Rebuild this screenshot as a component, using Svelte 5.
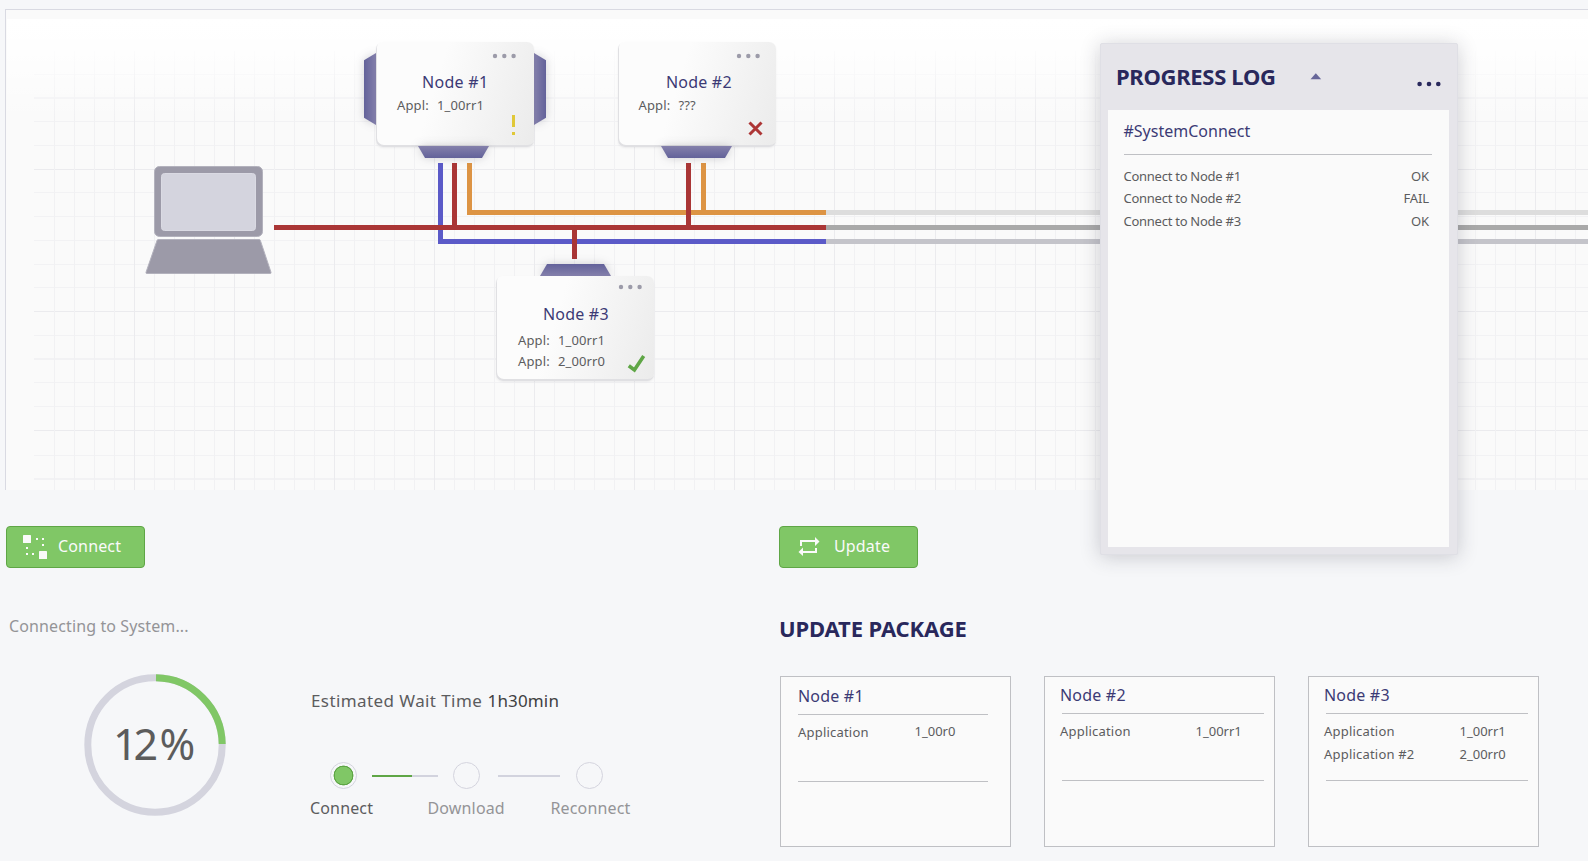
<script>
  const vLines = Array.from({ length: 77 }, (_, k) => ({
    pos: 54 + 20 * k + (k > 42 ? 1 : 0),
    major: k % 5 === 4
  }));
  const hLines = [
    [74, 0], [97, 2], [121, 0], [145, 0], [169, 1], [192, 0], [216, 0], [240, 0],
    [264, 0], [287, 0], [311, 1], [335, 0], [358, 2], [382, 0], [406, 0],
    [430, 1], [455, 0], [478, 2]
  ];

  const nodes = [
    {
      name: 'Node #1', x: 376, y: 42, dots: 119, dotY: 14, ports: ['left', 'right', 'bottom'], portX: 42,
      apps: ['1_00rr1'], state: 'warn', indent: 46, pad: 21, spacing: 0.3
    },
    {
      name: 'Node #2', x: 618, y: 42, dots: 121, dotY: 14, ports: ['bottom'], portX: 43,
      apps: ['???'], state: 'fail', indent: 48, pad: 20.5, spacing: 0.2
    },
    {
      name: 'Node #3', x: 496, y: 276, dots: 125, dotY: 11, ports: ['top'], portX: 44,
      apps: ['1_00rr1', '2_00rr0'], state: 'ok', indent: 47, pad: 22, spacing: 0.2
    }
  ];

  const log = [
    ['Connect to Node #1', 'OK'],
    ['Connect to Node #2', 'FAIL'],
    ['Connect to Node #3', 'OK']
  ];

  const packages = [
    { name: 'Node #1', apps: [['Application', '1_00r0']] },
    { name: 'Node #2', apps: [['Application', '1_00rr1']] },
    { name: 'Node #3', apps: [['Application', '1_00rr1'], ['Application #2', '2_00rr0']] }
  ];
</script>

<div class="page">
  <section class="map">
    <svg class="canvas" width="1588" height="490" viewBox="0 0 1588 490">
      <defs>
        <linearGradient id="fade" x1="0" y1="0" x2="0" y2="1">
          <stop offset="0" stop-color="#fff" />
          <stop offset=".3" stop-color="#fff" stop-opacity=".85" />
          <stop offset="1" stop-color="#fff" stop-opacity="0" />
        </linearGradient>
      </defs>
      <rect x="5" y="9" width="1583" height="481" fill="#fafafa" />
      {#each hLines as [y, kind]}
        <rect x="34" {y} width="1554" height={kind === 2 ? 2 : 1} fill={kind === 1 ? '#ebebee' : '#f2f2f4'} />
      {/each}
      {#each vLines as line}
        <rect x={line.pos} y="51" width="1" height="439" fill={line.major ? '#ebebee' : '#f1f1f3'} />
      {/each}
      <rect x="7" y="19" width="1581" height="100" fill="url(#fade)" />
      <rect x="5" y="9" width="1583" height="1" fill="#d9dae2" />
      <rect x="5" y="9" width="1" height="481" fill="#d9dae2" />

      <g stroke="#b3b2bd" stroke-width="1">
        <rect x="154.5" y="166.500" width="108" height="70" rx="5" fill="#9c9aa8" />
        <path d="M158.200 239.500h101q.8 0 1.100.8l10.700 32q.3 1.200-.8 1.200h-123.400q-1.100 0-.8-1.200l11.100-32q.3-.8 1.100-.8z" fill="#9c9aa8" />
        <rect x="161.500" y="173.500" width="94" height="57" rx="3" fill="#d4d4de" stroke="#dadae3" />
      </g>

      <g fill="none" stroke-width="5">
        <path d="M826 212.500H1588" stroke="#dddddd" />
        <path d="M826 227.500H1588" stroke="#a9a9a9" />
        <path d="M826 241.500H1588" stroke="#c4c4ca" />
        <path d="M440.500 163V241.500H826" stroke="#5b5ac8" />
        <path d="M469.500 163V212.500H826M703.500 163V210" stroke="#dd9444" />
        <path d="M274 227.500H826M454.500 163V226M688.500 163V226M574.500 229V259" stroke="#aa3636" />
      </g>
    </svg>

    {#each nodes as node}
      <article class="node" style="left:{node.x}px;top:{node.y}px">
        {#each node.ports as side}
          <span class="port {side}" style={side === 'top' || side === 'bottom' ? `left:${node.portX}px` : ''}><i></i></span>
        {/each}
        <div class="face" class:pair={node.apps.length > 1}>
          <h3 style="padding-left:{node.indent}px;letter-spacing:{node.spacing}px">{node.name}</h3>
          <dl style="padding-left:{node.pad}px">
            {#each node.apps as app}
              <dt>Appl:</dt><dd>{app}</dd>
            {/each}
          </dl>
        </div>
        <svg class="marks" width="158" height="105" viewBox="0 0 158 105">
          <g fill="#9c9ba9">
            {#each [0, 9.3, 18.6] as dx}
              <circle cx={node.dots + dx} cy={node.dotY} r="2.200" />
            {/each}
          </g>
          {#if node.state === 'warn'}
            <path d="M136 73h3v12h-3zM136 90h3v3h-3z" fill="#e0c838" />
          {:else if node.state === 'fail'}
            <path d="M131.500 80.500l12 12M143.500 80.500l-12 12" stroke="#ad3636" stroke-width="3" />
          {:else}
            <path d="M132.800 89.800l5.600 4.200 9.300-14" fill="none" stroke="#5fa646" stroke-width="3.600" />
          {/if}
        </svg>
      </article>
    {/each}
  </section>

  <main>
    <section class="connect">
      <button>
        <svg width="26" height="26" viewBox="0 0 26 26" fill="#fafafa">
          <rect x="0" y="0" width="8" height="8" rx=".6" />
          <rect x="16" y="16" width="8" height="8" rx=".6" />
          <path d="M13 3h2v2h-2zM19 3h2v2h-2zM19 9h2v2h-2zM3 12h2v2H3zM3 18h2v2H3zM9 18h2v2H9z" />
        </svg>
        <span>Connect</span>
      </button>
      <p class="status">Connecting to System...</p>
      <div class="progress">
        <svg class="ring" width="142" height="142" viewBox="0 0 142 142">
          <circle cx="71" cy="71" r="67.200" fill="none" stroke="#d4d4de" stroke-width="7" />
          <path d="M72 3.800A67.200 67.200 0 0 1 138.200 70" fill="none" stroke="#80c766" stroke-width="7" />
          <text x="29 49.5 75.5" y="86">12%</text>
        </svg>
        <div class="details">
          <p class="wait">Estimated Wait Time <b>1h30min</b></p>
          <div class="track">
            <span class="step active"></span>
            <span class="bar first"><i></i></span>
            <span class="step"></span>
            <span class="bar second"></span>
            <span class="step"></span>
          </div>
          <div class="labels"><span class="on">Connect</span><span>Download</span><span>Reconnect</span></div>
        </div>
      </div>
    </section>

    <section class="update">
      <button>
        <svg class="loop" width="24" height="20" viewBox="0 0 24 20" fill="#fafafa">
          <path d="M2 10V4h15V1l4.500 4.500L17 10V6H4v4z" />
          <path d="M19 12v5H5v3L.5 16 5 11.500V15h12v-3z" />
        </svg>
        <span>Update</span>
      </button>
      <h2>UPDATE PACKAGE</h2>
      <div class="cards">
        {#each packages as pack, i}
          <article class="card" class:wide={i > 0}>
            <h3>{pack.name}</h3>
            <hr />
            <dl>
              {#each pack.apps as [label, version]}
                <dt>{label}</dt><dd>{version}</dd>
              {/each}
            </dl>
            <hr />
          </article>
        {/each}
      </div>
    </section>
  </main>

  <aside class="log">
    <header>
      <h2>PROGRESS LOG</h2>
      <svg class="caret" width="12" height="7" viewBox="0 0 12 7"><path d="M.5 6.300L5.800 .2L11.200 6.300z" fill="#676699" /></svg>
      <svg class="more" width="24" height="6" viewBox="0 0 24 6" fill="#29285c">
        <circle cx="2.600" cy="3" r="2.300" /><circle cx="12" cy="3" r="2.300" /><circle cx="21.300" cy="3" r="2.300" />
      </svg>
    </header>
    <div class="body">
      <h3>#SystemConnect</h3>
      <hr />
      <ul>
        {#each log as [task, result]}
          <li><span>{task}</span><em>{result}</em></li>
        {/each}
      </ul>
    </div>
  </aside>
</div>

<style>
  :global(body) {
    margin: 0;
    background: #f6f7f9;
  }
  .page {
    position: relative;
    width: 1588px;
    height: 861px;
    overflow: hidden;
    background: #f6f7f9;
    color: #5c5c5e;
    font-family: "Noto Sans", "Open Sans", sans-serif;
    font-size: 13px;
    line-height: 18px;
  }
  h2, h3, p, dl, dd, ul {
    margin: 0;
    padding: 0;
  }
  h2 {
    color: #29285c;
    font-size: 22px;
    line-height: 30px;
    font-weight: 700;
    white-space: nowrap;
  }
  h3 {
    color: #3c3a75;
    font-size: 16px;
    line-height: 20px;
    font-weight: 400;
    letter-spacing: 0.2px;
  }
  svg { display: block; flex: none; }
  hr {
    border: 0;
    height: 1px;
    margin: 0;
    background: #bfc0c4;
  }

  .map { position: relative; height: 490px; }
  .node {
    position: absolute;
    width: 158px;
    height: 105px;
  }
  .face {
    position: absolute;
    inset: 0;
    box-sizing: border-box;
    padding-top: 30px;
    border-radius: 7px;
    background: linear-gradient(107deg, #fcfcfc 38%, #ebebeb 100%);
    box-shadow: inset 1px -2px 0 #e0e0e3, 0 1px 2px rgba(60, 60, 80, 0.08);
  }
  .face dl {
    display: grid;
    grid-template-columns: 40px auto;
    row-gap: 3px;
    margin-top: 4px;
    letter-spacing: 0.12px;
  }
  .face.pair { padding-top: 28px; }
  .face.pair dl { margin-top: 7px; }
  .marks { position: absolute; inset: 0; }

  .port {
    position: absolute;
    filter: drop-shadow(0 0 5px rgba(50, 50, 70, 0.22));
  }
  .port i { display: block; width: 100%; height: 100%; }
  .port.left, .port.right { top: 11px; width: 12px; height: 72px; }
  .port.left { left: -12px; }
  .port.right { right: -12px; }
  .port.top, .port.bottom { width: 71px; height: 12px; }
  .port.top { top: -12px; }
  .port.bottom { bottom: -11px; z-index: 1; }
  .left i {
    background: linear-gradient(90deg, #63629a, #8480ab);
    clip-path: polygon(0 10%, 100% 0, 100% 100%, 0 90%);
  }
  .right i {
    background: linear-gradient(270deg, #63629a, #8480ab);
    clip-path: polygon(0 0, 100% 10%, 100% 90%, 0 100%);
  }
  .top i {
    background: linear-gradient(180deg, #63629a, #8480ab);
    clip-path: polygon(7px 0, 64px 0, 100% 100%, 0 100%);
  }
  .bottom i {
    background: linear-gradient(0deg, #63629a, #8480ab);
    clip-path: polygon(0 0, 100% 0, 64px 100%, 7px 100%);
  }

  main {
    display: grid;
    grid-template-columns: 773px auto;
    padding: 36px 0 0 6px;
  }
  button {
    display: flex;
    align-items: flex-start;
    box-sizing: border-box;
    width: 139px;
    height: 42px;
    padding: 8px 0 0 16px;
    border: 1px solid #5fa646;
    border-radius: 4px;
    background: #80c766;
    color: #fafafa;
    font: 400 16px/20px "Noto Sans", sans-serif;
    letter-spacing: 0.15px;
  }
  button span { margin: 1px 0 0 9px; }
  button .loop { margin: 1px 0 0 1px; overflow: visible; }
  .update button { padding-left: 17px; }
  .update button span { margin-left: 12px; }

  .status {
    margin: 48px 0 38px 3px;
    color: #949497;
    font-size: 16px;
    line-height: 20px;
    letter-spacing: 0.12px;
  }
  .progress { display: flex; padding-left: 78px; }
  .ring text {
    font-size: 43px;
    fill: #5c5c5c;
  }
  .details { padding: 15px 0 0 84px; }
  .wait {
    padding-left: 1px;
    font-size: 17px;
    line-height: 23px;
    letter-spacing: 0.41px;
    white-space: nowrap;
  }
  .wait b {
    color: #404041;
    font-weight: 400;
    letter-spacing: 0.15px;
    margin-left: 0.500px;
  }
  .track {
    display: flex;
    align-items: center;
    margin: 51px 0 0 20px;
    height: 26px;
  }
  .step {
    box-sizing: border-box;
    width: 27px;
    height: 27px;
    margin-top: -1px;
    border: 1px solid #d4d4de;
    border-radius: 50%;
  }
  .step.active {
    margin-right: -1px;
    background: radial-gradient(circle, #80c766 8.500px, #5fa646 9px 9.700px, transparent 10.200px);
  }
  .bar { height: 2px; background: #d2d3de; }
  .bar i { display: block; width: 40px; height: 2px; background: #5fa646; }
  .first { width: 66px; margin: 0 15px 0 16px; }
  .second { width: 62px; margin: 0 16px 0 18px; }
  .labels {
    display: grid;
    grid-template-columns: 117.500px 123px auto;
    margin-top: 9px;
    color: #949497;
    font-size: 16px;
    line-height: 20px;
    letter-spacing: 0.15px;
  }
  .labels .on { color: #5c5c5e; }

  .update h2 { margin: 45px 0 33px 0; letter-spacing: -0.13px; }
  .cards { display: flex; gap: 33px; padding-left: 1px; }
  .card {
    box-sizing: border-box;
    width: 231px;
    height: 171px;
    padding: 9px 22px 0 17px;
    border: 1px solid #bfc0c4;
    background: #fafafa;
  }
  .card h3 + hr { margin-top: 8px; }
  .card dl {
    display: grid;
    grid-template-columns: 116px auto;
    align-content: start;
    row-gap: 5px;
    box-sizing: border-box;
    height: 66px;
    padding-top: 8px;
    letter-spacing: 0.2px;
  }
  .card dd { margin-top: -1px; padding-left: 0.500px; letter-spacing: 0; }
  .card.wide { padding: 8px 10px 0 15px; }
  .card.wide hr { margin-left: 2px; }
  .card.wide dl { grid-template-columns: 135px auto; }
  .card.wide dd { margin-top: 0; }

  .log {
    position: absolute;
    left: 1100px;
    top: 43px;
    box-sizing: border-box;
    width: 358px;
    height: 512px;
    padding: 0 8px 7px 7px;
    border: 1px solid #dfdfe5;
    border-radius: 2px;
    background: #e6e5ea;
    box-shadow: 0 2px 20px rgba(40, 40, 60, 0.22);
    display: flex;
    flex-direction: column;
  }
  .log header {
    display: flex;
    align-items: flex-start;
    height: 66px;
    padding: 0 8px 0 8px;
  }
  .log h2 { margin-top: 17px; letter-spacing: -0.31px; }
  .caret { margin: 29px 0 0 34px; }
  .more { margin: 37px 0 0 auto; }
  .body { flex: 1; padding: 11px 17px 0 16px; background: #fafafa; }
  .body h3 { margin-left: -0.500px; letter-spacing: 0; }
  .body hr { margin-top: 13px; }
  .body ul { list-style: none; padding: 12px 3px 0 0; }
  .body li {
    display: flex;
    justify-content: space-between;
    height: 23px;
    letter-spacing: -0.26px;
  }
  .body li:first-child { height: 22px; }
  .body li span { margin-left: -0.500px; }
  .body em { font-style: normal; letter-spacing: -0.1px; }
</style>
